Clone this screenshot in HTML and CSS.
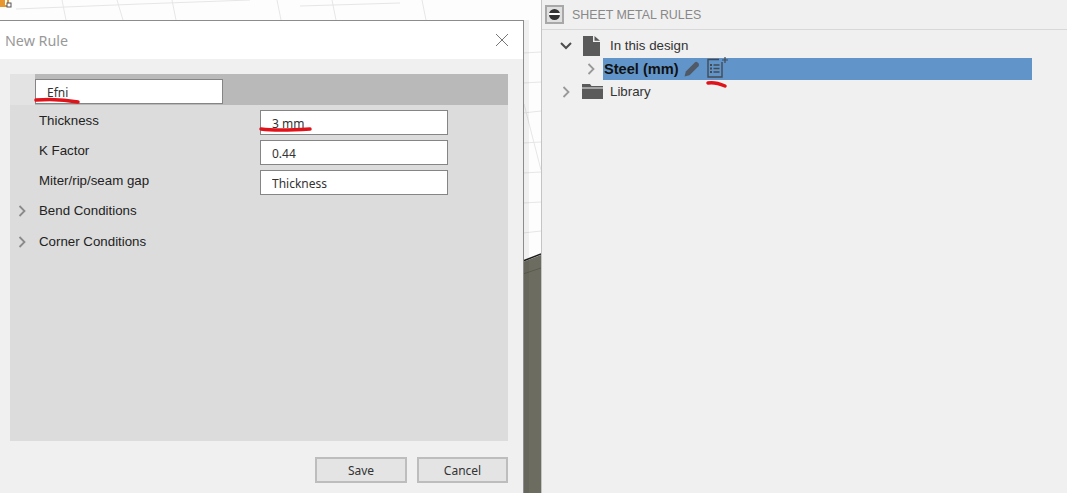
FILE: index.html
```html
<!DOCTYPE html>
<html lang="en">
<head>
    <meta charset="UTF-8">
    <meta name="viewport" content="width=device-width, initial-scale=1.0">
    <title>New Rule</title>
    <link rel="stylesheet" href="styles.css">
</head>
<body>
    <div class="app">
        <div class="canvas">
            <svg class="canvas-bg" width="541" height="493" viewBox="0 0 541 493">
                <rect width="541" height="493" fill="#fdfdfd"/>
                <g stroke="#e6e6e6" stroke-width="1" fill="none">
                    <path d="M16 9 L140 4 L250 0"/>
                    <path d="M62 0 L66 20 M117 0 L123 20 M172 0 L176 20 M277 0 L281 20 M332 0 L336 20 M422 0 L426 20"/>
                    <path d="M300 6 L400 3"/>
                    <path d="M523 53 L541 52 M523 83 L541 82 M523 113 L541 111 M523 143 L541 142 M523 173 L541 172 M523 203 L541 202 M523 233 L541 231"/>
                    <path d="M524 104 L541 170"/>
                </g>
                <polygon points="523,262 541,255 541,493 523,493" fill="#6d6c61"/>
                <path d="M523 274 L541 268" stroke="#5a5a50" stroke-width="1"/>
                <path d="M523 261 L541 254" stroke="#1c1c1a" stroke-width="1.5"/>
                <rect x="524" y="20" width="5" height="473" fill="#000" opacity="0.05"/>
                <rect x="0" y="0" width="9" height="7" fill="#e8962e"/>
                <rect x="5" y="0" width="2" height="5" fill="#fff"/>
                <rect x="7" y="3" width="4" height="4" fill="#fff" stroke="#555"/>
            </svg>

            <div class="dialog">
                <div class="dialog-title">
                    <span>New Rule</span>
                    <svg class="close-icon" width="14" height="14" viewBox="0 0 14 14">
                        <path d="M1 1 L13 13 M13 1 L1 13" stroke="#777" stroke-width="1" fill="none"/>
                    </svg>
                </div>
                <div class="dialog-body">
                    <div class="rule-panel">
                        <div class="rule-name">
                            <input class="name-input" type="text" value="Efni">
                        </div>
                        <div class="field-row">
                            <label>Thickness</label>
                            <input type="text" value="3 mm">
                        </div>
                        <div class="field-row">
                            <label>K Factor</label>
                            <input type="text" value="0.44">
                        </div>
                        <div class="field-row">
                            <label>Miter/rip/seam gap</label>
                            <input type="text" value="Thickness">
                        </div>
                        <div class="group-row first">
                            <svg class="chevron" width="8" height="12" viewBox="0 0 8 12"><path d="M1.5 1 L6.5 6 L1.5 11" stroke="#8a8a8a" stroke-width="1.8" fill="none"/></svg>
                            <span>Bend Conditions</span>
                        </div>
                        <div class="group-row">
                            <svg class="chevron" width="8" height="12" viewBox="0 0 8 12"><path d="M1.5 1 L6.5 6 L1.5 11" stroke="#8a8a8a" stroke-width="1.8" fill="none"/></svg>
                            <span>Corner Conditions</span>
                        </div>
                    </div>
                    <div class="dialog-buttons">
                        <button type="button">Save</button>
                        <button type="button">Cancel</button>
                    </div>
                </div>
            </div>
        </div>

        <div class="rules">
            <div class="rules-header">
                <span class="collapse-btn"><i></i></span>
                <span>SHEET METAL RULES</span>
            </div>
            <div class="tree">
                <div class="tree-row design">
                    <svg class="tree-chevron" width="12" height="8" viewBox="0 0 12 8"><path d="M1 1 L6 6 L11 1" stroke="#4d4d4d" stroke-width="2" fill="none"/></svg>
                    <svg class="doc-icon" width="17" height="20" viewBox="0 0 17 20"><path d="M0 0 H10 V6 H17 V20 H0 Z M11.5 0 L17 4.8 H11.5 Z" fill="#5a5a5a"/></svg>
                    <span>In this design</span>
                </div>
                <div class="tree-row steel">
                    <svg class="tree-chevron" width="8" height="12" viewBox="0 0 8 12"><path d="M1.5 1 L6.5 6 L1.5 11" stroke="#999" stroke-width="1.8" fill="none"/></svg>
                    <div class="steel-bar">
                        <b>Steel (mm)</b>
                        <svg class="pencil" width="16" height="16" viewBox="0 0 16 16"><path d="M0.5 15.5 L1.8 10.5 L10.8 1.5 Q12.2 0.3 13.6 1.4 L14.6 2.4 Q15.7 3.8 14.5 5.2 L5.5 14.2 Z" fill="#505a66"/></svg>
                        <svg class="list-add" width="21" height="21" viewBox="0 0 21 21">
                            <g fill="none" stroke="#434a52" stroke-width="1.4">
                                <path d="M15 5 V20 H1 V2.5 H12"/>
                                <path d="M6.5 8 H12.5 M6.5 11.5 H12.5 M6.5 15 H12.5"/>
                                <path d="M3 8 H5 M3 11.5 H5 M3 15 H5" stroke-width="1.8"/>
                                <path d="M18 0 V6 M15 3 H21" stroke-width="1.2"/>
                            </g>
                        </svg>
                    </div>
                </div>
                <div class="tree-row library">
                    <svg class="tree-chevron" width="8" height="12" viewBox="0 0 8 12"><path d="M1.5 1 L6.5 6 L1.5 11" stroke="#999" stroke-width="1.8" fill="none"/></svg>
                    <svg class="folder-icon" width="21" height="15" viewBox="0 0 21 15"><path d="M0 0 H8 L9.5 2 H21 V3.5 H0 Z M0 4.5 H21 V15 H0 Z" fill="#5a5a5a"/></svg>
                    <span>Library</span>
                </div>
            </div>
        </div>
    </div>

    <!-- red pen marks drawn over the screenshot -->
    <svg class="marks" width="1067" height="493" viewBox="0 0 1067 493">
        <g fill="none" stroke="#e0131b" stroke-width="3.5" stroke-linecap="round">
            <path d="M36 100 C48 99 62 99 78 102"/>
            <path d="M261 129 C275 131 295 130 310 129"/>
            <path d="M708 83 C713 82 718 83 725 86"/>
        </g>
    </svg>
</body>
</html>
```

FILE: styles.css
```css
html, body { margin: 0; padding: 0; }
body { width: 1067px; height: 493px; overflow: hidden; position: relative; font-family: "Liberation Sans", Arial, sans-serif; font-size: 13.3px; color: #222; background: #f0f0f0; }
.app { display: flex; height: 493px; }

.canvas { position: relative; width: 541px; flex: none; border-right: 1px solid #c4c4c4; }
.canvas-bg { display: block; }

.dialog { position: absolute; left: 0; top: 20px; width: 524px; height: 473px; box-sizing: border-box; border-top: 1px solid #8c8c8c; border-right: 1px solid #8c8c8c; background: #f0f0f0; display: flex; flex-direction: column; }
.dialog-title { height: 38px; flex: none; background: #fff; display: flex; align-items: center; justify-content: space-between; padding: 0 14px 0 5px; font-family: "Noto Sans", sans-serif; font-size: 14.3px; color: #999; }
.close-icon { display: block; }
.dialog-body { flex: 1; padding: 15px 15px 0 10px; display: flex; flex-direction: column; }

.rule-panel { height: 367px; background: #dcdcdc; }
.rule-name { height: 31px; margin-bottom: 5px; padding: 5px 0 0 25px; box-sizing: border-box; background: linear-gradient(90deg, #e3e3e3 25px, #b9b9b9 25px); }

input { display: block; box-sizing: border-box; height: 25px; border: 1px solid #858585; background: #fff; padding: 1px 0 0 11px; margin: 0; font-family: "Noto Sans", sans-serif; font-size: 12px; color: #333; outline: none; }
.name-input { width: 188px; }

.field-row { display: flex; align-items: center; height: 25px; margin-bottom: 5px; padding-left: 29px; }
.field-row label { width: 221px; flex: none; margin-top: -5px; }
.field-row input { width: 188px; }

.group-row { display: flex; align-items: center; height: 20px; margin-top: 11px; padding-left: 8px; }
.group-row.first { margin-top: 5.5px; }
.group-row span { margin-left: 13px; }
.chevron { display: block; flex: none; }

.dialog-buttons { display: flex; justify-content: flex-end; gap: 10px; margin-top: 16px; }
button { width: 92px; height: 26px; box-sizing: border-box; border: 2px solid #bdbdbd; background: #e4e4e4; padding: 1px 0 0; font-family: "Noto Sans", sans-serif; font-size: 12px; color: #333; }
button + button { width: 91px; }

.rules { flex: 1; background: #f0f0f0; color: #333; }
.rules-header { height: 30px; box-sizing: border-box; border-bottom: 1px solid #d8d8d8; display: flex; align-items: center; gap: 8px; padding-left: 3px; color: #888; font-size: 12.4px; }
.collapse-btn { width: 19px; height: 19px; box-sizing: border-box; border: 2px solid #a8a8a8; background: #e0e0e0; display: flex; align-items: center; justify-content: center; }
.collapse-btn i { display: block; width: 11px; height: 11px; border-radius: 50%; background: linear-gradient(#333 4px, #fff 4px, #fff 6px, #333 6px); }

.tree { padding-top: 4px; }
.tree-row { display: flex; align-items: center; }
.design { height: 23px; padding-left: 18px; }
.design .doc-icon { margin-left: 11px; margin-right: 10px; }
.steel { height: 23px; padding-left: 45px; }
.steel-bar { display: flex; align-items: center; height: 22px; width: 428px; margin-left: 8px; padding-left: 1px; background: #6195c9; color: #111; }
.steel-bar b { font-size: 14.6px; }
.pencil { margin-left: 5px; }
.list-add { margin-left: 7px; margin-top: -2px; }
.library { height: 23px; padding-left: 20px; }
.library .folder-icon { margin-left: 12px; margin-right: 7px; }

.marks { position: absolute; left: 0; top: 0; pointer-events: none; }
```
